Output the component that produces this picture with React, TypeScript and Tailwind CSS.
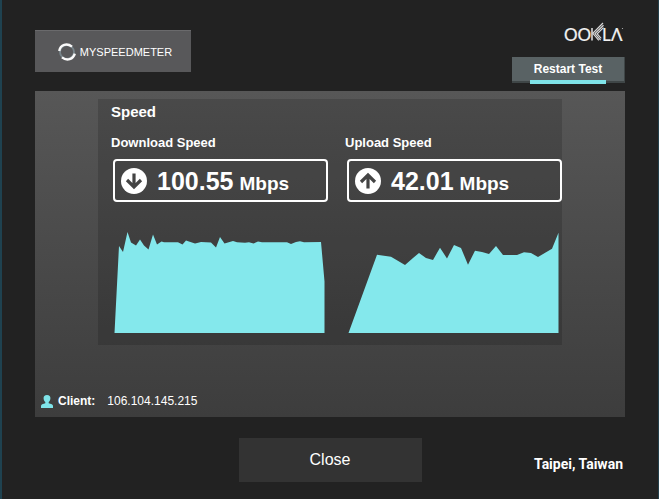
interface SpeedMetricProps {
    id: string;
    label: string;
    value: string;
    direction: 'down' | 'up';
    points: string;
}

const DOWNLOAD_POINTS =
    '0.5,101 5,14 9,20 13.5,0 17,10.5 22,13.5 26,7.5 30,13.5 34.5,17.5 39,2.5 43,12.5 47.5,9.5 50,10.3 64,10.3 68.5,12.5 72,8.5 81,11.5 87,10 97,10.5 102,15.5 106,5 110.5,11.5 119,9 123,10.3 131,10.8 135,10.3 139.5,11.5 144,9.5 148,10.3 173,10.3 177,12 182,10 186,9.3 190,10.3 207,10 210.5,49.5 210.5,101';

const UPLOAD_POINTS =
    '0.5,101 29,22.7 43,24.7 57,33 65,26 71,21 78,26 85,28 92,15.7 99,26.5 106,13 113,16 120,32.7 127,18.7 134,20 141,22 148,14 155,23 169,23 176,20.3 183,21 190,25 204,16.7 210.5,0.7 210.5,101';

function OoklaLogo() {
    return (
        <svg className="mr-px h-6 w-[60px]" viewBox="0 0 60 24" role="img" aria-label="Ookla">
            <g fontFamily="Lato" fontSize="17" fill="#f2f2f2" stroke="#f2f2f2" strokeWidth="0.2">
                <text x="0" y="18.5">
                    OO
                </text>
                <text x="38" y="18.5">
                    L
                </text>
                <text x="47" y="18.5" fontFamily="Lato, Inter">
                    Λ
                </text>
            </g>
            <path d="M28 6V18.5" stroke="#f2f2f2" strokeWidth="1.4" />
            <g fill="none" stroke="#d8d8d8" strokeWidth="1.2">
                <path d="M39 1L28.8 11.4l6 7" />
                <path d="M39.5 3.2L31 11.6l5.6 6.6" />
                <path d="M39.5 5.6L33.2 11.8l4 4.6" />
            </g>
            <circle cx="58.5" cy="6.5" r="0.6" fill="#bbb" />
        </svg>
    );
}

function MySpeedMeterLogo() {
    return (
        <div className="mt-2 flex h-[42px] w-[156px] items-center justify-center gap-1 border-t border-[#6a6a6c] bg-[#58585a] pl-1">
            <svg className="h-[18px] w-[18px]" viewBox="0 0 18 18" fill="none">
                <circle cx="9" cy="9" r="7" stroke="#77848a" strokeWidth="1.8" />
                <path d="M1.2 8C2.4 1.4 9-.2 14 3.6" stroke="#fafafa" strokeWidth="2.4" />
                <path d="M16.8 10.6C15.2 16.4 9 18.4 4 14.4" stroke="#fafafa" strokeWidth="2.4" />
            </svg>
            <span className="font-['Liberation_Sans'] text-[11px] leading-4 text-white">MYSPEEDMETER</span>
        </div>
    );
}

function ArrowBadge({ direction }: { direction: 'down' | 'up' }) {
    return (
        <svg className="h-[26px] w-[26px] shrink-0" viewBox="0 0 26 26" fill="none">
            <circle cx="13" cy="13" r="13" fill="#fff" />
            <path
                d={direction === 'down' ? 'M13 5.5V19M6 12l7 7 7-7' : 'M13 20.5V7M6 14l7-7 7 7'}
                stroke="#444"
                strokeWidth="3.2"
            />
        </svg>
    );
}

function SpeedMetric({ id, label, value, direction, points }: SpeedMetricProps) {
    return (
        <section aria-labelledby={id}>
            <h3 id={id} className="pt-px text-[13px] leading-5 font-bold">
                {label}
            </h3>
            <div className="mt-1.5 ml-0.5 flex h-[43px] items-center rounded-[4px] border-2 border-white pl-1.5">
                <ArrowBadge direction={direction} />
                <p className="ml-2.5 pt-1 leading-8 font-bold whitespace-nowrap">
                    <span className="text-[25px]">{value}</span>
                    <span className="ml-1.5 text-[19px]">Mbps</span>
                </p>
            </div>
            <svg
                className="mt-[30px] ml-[3px] block h-[101px] w-[211px]"
                viewBox="0 0 211 101"
                preserveAspectRatio="none"
            >
                <polygon points={points} fill="#84e8ec" />
            </svg>
        </section>
    );
}

export default function App() {
    return (
        <div className="min-h-screen bg-white pr-1 font-['Liberation_Sans',Arial,sans-serif] text-white">
            <div className="min-h-screen border-r border-l-2 border-r-[#24404b] border-l-[#1f4250] bg-[#222] px-[33px] pt-[22px]">
                <header className="mb-2 flex items-start justify-between">
                    <MySpeedMeterLogo />
                    <div className="flex flex-col items-end">
                        <OoklaLogo />
                        <button
                            type="button"
                            className="relative mt-[11px] h-[26px] w-[113px] border-r border-b-2 border-[#3f4647] bg-[#596264] text-[12px] leading-4 font-bold"
                        >
                            Restart Test
                            <span className="absolute inset-x-[18px] -bottom-[3px] h-1 bg-[#7fe3e8]" />
                        </button>
                    </div>
                </header>

                <main className="bg-linear-to-b from-[#575757] to-[#3d3d3d] px-[63px] pt-2 pb-1.5">
                    <div className="bg-black/15 pt-[3px] pb-3 pl-[13px]">
                        <h2 className="text-[15px] leading-5 font-bold">Speed</h2>
                        <div className="mt-2.5 grid grid-cols-2 gap-[17px]">
                            <SpeedMetric
                                id="download"
                                label="Download Speed"
                                value="100.55"
                                direction="down"
                                points={DOWNLOAD_POINTS}
                            />
                            <SpeedMetric
                                id="upload"
                                label="Upload Speed"
                                value="42.01"
                                direction="up"
                                points={UPLOAD_POINTS}
                            />
                        </div>
                    </div>
                    <div className="mt-[46px] -ml-[57px] flex h-5 items-center text-[12px] leading-5">
                        <svg className="h-[13px] w-3" viewBox="0 0 12 13" fill="#7fe3e8">
                            <path d="M6 0C3.6 0 2.4 1.4 2.6 3.4 2.7 5.2 3.6 6.3 4.3 7v1.3L1.2 9.3Q0 9.8 0 11V13h12v-2q0-1.2-1.2-1.7L7.7 8.3V7c.7-.7 1.6-1.8 1.7-3.6C9.6 1.4 8.4 0 6 0z" />
                        </svg>
                        <span className="ml-[5px] font-bold">Client:</span>
                        <span className="ml-3">106.104.145.215</span>
                    </div>
                </main>

                <footer className="mt-[21px] grid grid-cols-[1fr_183px_1fr] items-center">
                    <button type="button" className="col-start-2 h-11 bg-[#333] text-[16px] leading-5">
                        Close
                    </button>
                    <span className="mt-2 mr-0.5 text-right font-['Roboto'] text-[14px] leading-5 font-bold">
                        Taipei, Taiwan
                    </span>
                </footer>
            </div>
        </div>
    );
}
